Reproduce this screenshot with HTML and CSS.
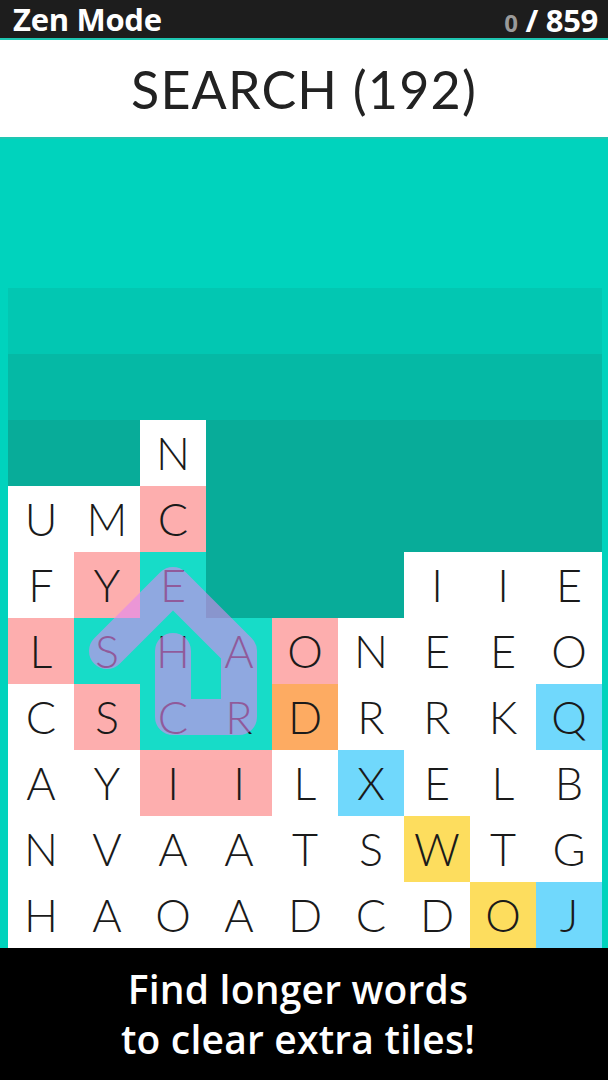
FILE: index.html
```html
<html>
  <head>
    <link rel="stylesheet" href="styles.css">
  </head>
  <body>
    <div class="topbar">
      <span class="mode">Zen Mode</span>
      <span class="score"><span class="found">0</span> / 859</span>
    </div>
    <div class="header">
      <h1>SEARCH (192)</h1>
    </div>
    <div class="field">
      <div class="board">
        <div class="ghost ghost-1"></div>
        <div class="ghost ghost-2"></div>
        <div class="tiles">
          <!-- row 1 -->
          <div class="cell"></div>
          <div class="cell"></div>
          <div class="cell white">N</div>
          <div class="cell"></div>
          <div class="cell"></div>
          <div class="cell"></div>
          <div class="cell"></div>
          <div class="cell"></div>
          <div class="cell"></div>
          <!-- row 2 -->
          <div class="cell white">U</div>
          <div class="cell white">M</div>
          <div class="cell pink">C</div>
          <div class="cell"></div>
          <div class="cell"></div>
          <div class="cell"></div>
          <div class="cell"></div>
          <div class="cell"></div>
          <div class="cell"></div>
          <!-- row 3 -->
          <div class="cell white">F</div>
          <div class="cell pink">Y</div>
          <div class="cell picked">E</div>
          <div class="cell"></div>
          <div class="cell"></div>
          <div class="cell"></div>
          <div class="cell white">I</div>
          <div class="cell white">I</div>
          <div class="cell white">E</div>
          <!-- row 4 -->
          <div class="cell pink">L</div>
          <div class="cell picked">S</div>
          <div class="cell picked">H</div>
          <div class="cell picked">A</div>
          <div class="cell pink">O</div>
          <div class="cell white">N</div>
          <div class="cell white">E</div>
          <div class="cell white">E</div>
          <div class="cell white">O</div>
          <!-- row 5 -->
          <div class="cell white">C</div>
          <div class="cell pink">S</div>
          <div class="cell picked">C</div>
          <div class="cell picked">R</div>
          <div class="cell orange">D</div>
          <div class="cell white">R</div>
          <div class="cell white">R</div>
          <div class="cell white">K</div>
          <div class="cell blue">Q</div>
          <!-- row 6 -->
          <div class="cell white">A</div>
          <div class="cell white">Y</div>
          <div class="cell pink">I</div>
          <div class="cell pink">I</div>
          <div class="cell white">L</div>
          <div class="cell blue">X</div>
          <div class="cell white">E</div>
          <div class="cell white">L</div>
          <div class="cell white">B</div>
          <!-- row 7 -->
          <div class="cell white">N</div>
          <div class="cell white">V</div>
          <div class="cell white">A</div>
          <div class="cell white">A</div>
          <div class="cell white">T</div>
          <div class="cell white">S</div>
          <div class="cell yellow">W</div>
          <div class="cell white">T</div>
          <div class="cell white">G</div>
          <!-- row 8 -->
          <div class="cell white">H</div>
          <div class="cell white">A</div>
          <div class="cell white">O</div>
          <div class="cell white">A</div>
          <div class="cell white">D</div>
          <div class="cell white">C</div>
          <div class="cell white">D</div>
          <div class="cell yellow">O</div>
          <div class="cell blue">J</div>

          <!-- path of the word being traced: S-E-A-R-C-H -->
          <svg class="trace" width="594" height="528" viewBox="0 0 594 528">
            <path d="M99 231 L165 165 L231 231 L231 297 L165 297 L165 231"
                  fill="none" stroke="rgb(223,133,240)" stroke-width="36"
                  stroke-linejoin="round" stroke-linecap="round" opacity="0.6"/>
          </svg>
        </div>
      </div>
    </div>
    <div class="footer">
      <p>Find longer words<br>to clear extra tiles!</p>
    </div>
  </body>
</html>
```

FILE: styles.css
```css
* {
  box-sizing: border-box;
}

body {
  margin: 0;
  width: 608px;
  font-family: "Open Sans", Arial, sans-serif;
}

.topbar {
  height: 40px;
  background-color: #1d1d1d;
  border-bottom: 2px solid #1fc6b2;
  color: #fff;
  display: flex;
  justify-content: space-between;
  align-items: flex-start;
  padding: 0 10px 0 13px;
  font-weight: 700;
}

.mode {
  font-size: 31px;
  line-height: 38px;
  letter-spacing: -0.3px;
}

.score {
  font-size: 31px;
  line-height: 36px;
  letter-spacing: -0.3px;
  margin-top: 2px;
}

.found {
  color: #9a9a9a;
  font-size: 24px;
}

.header {
  height: 99px;
  background-color: #fff;
  border-bottom: 2px solid #1fc6b2;
  display: flex;
  justify-content: center;
  align-items: center;
}

.header h1 {
  margin: 0;
  font-family: Lato, "Open Sans", sans-serif;
  font-weight: 400;
  font-size: 52px;
  color: #222;
  letter-spacing: 1.2px;
}

.field {
  height: 809px;
  background-color: #00d3bd;
  display: flex;
  flex-direction: column;
  justify-content: flex-end;
  padding: 0 6px 0 8px;
}

.board {
  width: 594px;
}

.ghost {
  height: 66px;
}

.ghost-1 {
  background-color: #02c7b2;
}

.ghost-2 {
  background-color: #05b9a5;
}

.tiles {
  position: relative;
  display: grid;
  grid-template-columns: repeat(9, 66px);
  grid-auto-rows: 66px;
  background-color: #08ac99;
}

.cell {
  display: flex;
  justify-content: center;
  align-items: center;
  font-family: Lato, "Open Sans", sans-serif;
  font-weight: 300;
  font-size: 45px;
  color: #1a1a1a;
}

.white {
  background-color: #fff;
}

.pink {
  background-color: #fdaeae;
}

.orange {
  background-color: #fdab62;
}

.blue {
  background-color: #70d8fc;
}

.yellow {
  background-color: #fddd5e;
}

.picked {
  background-color: #17dcc8;
}

.trace {
  position: absolute;
  left: 0;
  top: 0;
  pointer-events: none;
}

.footer {
  height: 132px;
  background-color: #000;
  color: #fff;
  text-align: center;
  padding: 16px 12px 0 0;
}

.footer p {
  margin: 0;
  font-size: 39px;
  font-weight: 600;
  line-height: 50px;
  letter-spacing: 0.2px;
}
```
